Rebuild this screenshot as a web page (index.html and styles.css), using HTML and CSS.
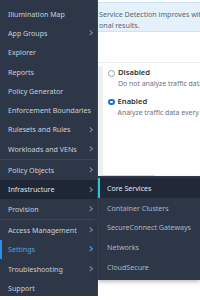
FILE: index.html
```html
<!DOCTYPE html>
<html>
<head>
<meta charset="utf-8">
<link rel="stylesheet" href="styles.css">
</head>
<body>
<div class="page">
  <div class="banner">
    <p>Service Detection improves with</p>
    <p>onal results.</p>
  </div>
  <div class="section">
    <div class="strip"></div>
    <div class="options">
      <div class="opt">
        <span class="radio"></span>
        <div class="opt-text"><div class="opt-title">Disabled</div><div class="opt-desc">Do not analyze traffic data</div></div>
      </div>
      <div class="opt">
        <span class="radio on"></span>
        <div class="opt-text"><div class="opt-title">Enabled</div><div class="opt-desc">Analyze traffic data every 1 hour</div></div>
      </div>
    </div>
  </div>
  <div class="foot-line"></div>
</div>

<nav class="menu">
  <div class="item">Illumination Map</div>
  <div class="item has">App Groups<i class="chev"></i></div>
  <div class="item">Explorer</div>
  <div class="item">Reports</div>
  <div class="item">Policy Generator</div>
  <div class="item">Enforcement Boundaries</div>
  <div class="item has">Rulesets and Rules<i class="chev"></i></div>
  <div class="item has">Workloads and VENs<i class="chev"></i></div>
  <div class="sep"></div>
  <div class="item has">Policy Objects<i class="chev"></i></div>
  <div class="item has open">Infrastructure<i class="chev"></i></div>
  <div class="item has">Provision<i class="chev"></i></div>
  <div class="sep"></div>
  <div class="item has">Access Management<i class="chev"></i></div>
  <div class="item has active">Settings<i class="chev"></i></div>
  <div class="item has">Troubleshooting<i class="chev"></i></div>
  <div class="item">Support</div>
</nav>

<nav class="submenu">
  <div class="sub current">Core Services</div>
  <div class="sub">Container Clusters</div>
  <div class="sub">SecureConnect Gateways</div>
  <div class="sub">Networks</div>
  <div class="sub">CloudSecure</div>
</nav>
</body>
</html>
```
FILE: styles.css
```css
html, body {
  margin: 0;
  padding: 0;
}
body {
  width: 200px;
  height: 300px;
  overflow: hidden;
  position: relative;
  background: #ffffff;
  font-family: "Noto Sans", "Open Sans", sans-serif;
}
.page {
  padding-top: 2px;
  overflow: hidden;
}
.banner {
  height: 30px;
  margin-left: 60px;
  background: #e4f1fb;
  border: 1px solid #cde3f4;
  border-right: none;
  box-sizing: border-box;
  padding: 6px 0 0 38px;
  overflow: hidden;
}
.banner p {
  margin: 0;
  font-size: 7.1px;
  line-height: 10.5px;
  color: #5a6470;
  white-space: nowrap;
}
.section {
  margin-top: 30px;
  border-top: 1px solid #ececec;
  display: flex;
  height: 112px;
  overflow: hidden;
}
.strip {
  flex: none;
  width: 103px;
  background: #f0f0f0;
  margin-top: 3px;
}
.options {
  padding: 4px 0 0 5px;
  display: flex;
  flex-direction: column;
  gap: 6px;
  min-width: 0;
}
.opt {
  display: flex;
  gap: 3px;
}
.radio {
  width: 5px;
  height: 5px;
  border: 1px solid #9aa0a6;
  border-radius: 50%;
  background: #fff;
  margin-top: 2.5px;
  flex: none;
}
.radio.on {
  border: 2.2px solid #1a73c8;
  width: 2.6px;
  height: 2.6px;
}
.opt-title {
  font-size: 7.6px;
  line-height: 11px;
  color: #2b2f36;
  font-weight: 600;
}
.opt-desc {
  font-size: 6.9px;
  line-height: 12px;
  color: #6b7280;
  white-space: nowrap;
}
.foot-line {
  margin: 0 45px 0 100px;
  border-top: 1px solid #dedede;
}

.menu {
  position: absolute;
  left: 0;
  top: 0;
  width: 98px;
  height: 296px;
  background: #2d3748;
  border-right: 1px solid #3a4456;
  padding-top: 4px;
  box-sizing: border-box;
}
.item {
  height: 19.3px;
  display: flex;
  align-items: center;
  justify-content: space-between;
  padding: 0 4px 0 6px;
  font-size: 7.1px;
  color: #c9d0da;
  white-space: nowrap;
  box-sizing: border-box;
  border-left: 2px solid transparent;
}
.chev {
  width: 2.5px;
  height: 2.5px;
  border-right: 1px solid #7e8898;
  border-bottom: 1px solid #7e8898;
  transform: rotate(-45deg);
  margin-right: 2px;
}
.sep {
  height: 1px;
  background: #3b4558;
  margin: 0.5px 0;
}
.item.open {
  background: #1f2636;
  color: #dfe4ea;
}
.item.active {
  color: #4aa3ea;
  border-left-color: #2f8fe0;
}
.item.active .chev {
  border-color: #4aa3ea;
}

.submenu {
  position: absolute;
  left: 98px;
  top: 176px;
  width: 102px;
  height: 104px;
  background: #2d3748;
  padding-top: 2px;
  box-sizing: border-box;
  box-shadow: 0 2px 4px rgba(0,0,0,0.25);
}
.sub {
  height: 19.8px;
  display: flex;
  align-items: center;
  padding-left: 7px;
  font-size: 7.1px;
  color: #aeb6c2;
  white-space: nowrap;
  border-left: 2px solid transparent;
  box-sizing: border-box;
}
.sub.current {
  background: #212939;
  color: #e1e6ec;
  border-left-color: #22c8d6;
}
```
